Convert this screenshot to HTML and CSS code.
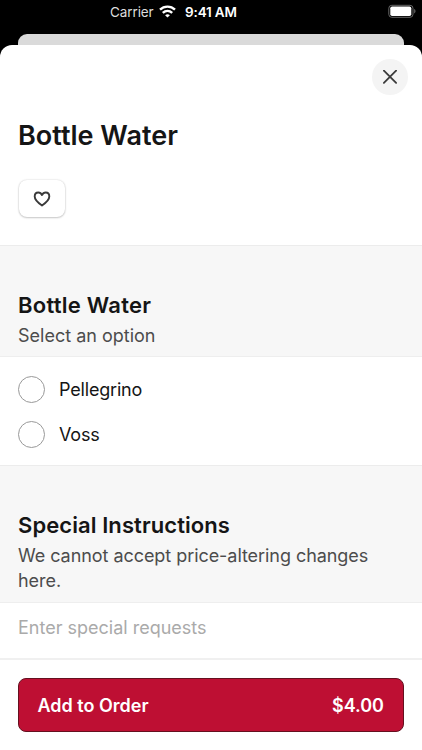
FILE: index.html
```html
<!DOCTYPE html>
<html lang="en">
<head>
<meta charset="utf-8">
<title>Bottle Water</title>
<link rel="stylesheet" href="styles.css">
</head>
<body>
<header class="status">
  <div class="status-center">
    <span class="carrier">Carrier</span>
    <svg class="wifi" viewBox="0 0 17 13" width="17" height="13" fill="none" stroke="#fff" stroke-width="2.4">
      <path d="M1 4.700C5.200.6 11.800.6 16 4.700"/>
      <path d="M3.800 7.900c2.700-2.500 6.700-2.500 9.400 0"/>
      <path d="M8.500 12.600 6.100 10.200c1.400-1.200 3.400-1.200 4.800 0z" fill="#fff" stroke="none"/>
    </svg>
    <span class="time">9:41 AM</span>
  </div>
  <svg class="battery" viewBox="0 0 28 14" width="28" height="14">
    <rect x=".8" y="1.300" width="24.200" height="12" rx="3" fill="none" stroke="#666" stroke-width="1"/>
    <rect x="2.300" y="2.500" width="21" height="9.500" rx="1.800" fill="#fff"/>
    <path d="M26.200 5.100c1.700.5 1.700 3.900 0 4.400z" fill="#666"/>
  </svg>
</header>
<div class="back-card"></div>
<main class="sheet">
  <section class="intro">
    <button class="close" aria-label="Close">
      <svg viewBox="0 0 14 14" width="14" height="14" fill="none" stroke="#3a3a3a" stroke-width="1.8" stroke-linecap="round"><path d="M.9.7l12.200 12.200M13.100.7L.9 12.900"/></svg>
    </button>
    <h1>Bottle Water</h1>
    <button class="like" aria-label="Favorite">
      <svg viewBox="0 0 18 16" width="18" height="16" fill="none" stroke="#3a3a3a" stroke-width="1.900" stroke-linejoin="round"><path d="M9 14.500C5.500 12.200 1.700 9.200 1.700 5.600 1.700 3.100 3.300 1.500 5.300 1.500 7 1.500 8.300 2.500 9 4 9.700 2.500 11 1.500 12.700 1.500c2 0 3.600 1.600 3.600 4.100 0 3.600-3.800 6.600-7.300 8.900z"/></svg>
    </button>
  </section>
  <section class="band band-options">
    <h2>Bottle Water</h2>
    <p>Select an option</p>
  </section>
  <section class="options">
    <label class="option"><span class="radio"></span>Pellegrino</label>
    <label class="option"><span class="radio"></span>Voss</label>
  </section>
  <section class="band band-notes">
    <h2 class="notes-title">Special Instructions</h2>
    <p>We cannot accept price-altering changes here.</p>
  </section>
  <section class="request">Enter special requests</section>
  <footer class="footer">
    <button class="add"><span class="add-label">Add to Order</span><span class="price">$4.00</span></button>
  </footer>
</main>
</body>
</html>
```
FILE: styles.css
```css
* { box-sizing: border-box; }
body {
  margin: 0;
  width: 422px;
  height: 750px;
  overflow: hidden;
  display: flex;
  flex-direction: column;
  background: #000;
  color: #151515;
  font-family: Inter, sans-serif;
}
button { font: inherit; padding: 0; border: 0; }
h1, h2, p { margin: 0; }
h1, h2 { font-weight: 600; white-space: nowrap; }
.status {
  height: 34px;
  flex: none;
  display: flex;
  justify-content: space-between;
  align-items: flex-start;
  padding: 4px 6px 0 110px;
  color: #fff;
  font-size: 13.5px;
  line-height: 16px;
}
.status-center { display: flex; }
.carrier { width: 44px; color: #ddd; letter-spacing: -.1px; }
.wifi { margin: 1px 0 0 5px; }
.time { margin-left: 9px; font-weight: 600; white-space: nowrap; letter-spacing: -.15px; }
.back-card {
  height: 11px;
  flex: none;
  margin: 0 18px;
  background: #dadada;
  border-radius: 9px 9px 0 0;
}
.sheet {
  flex: 1;
  display: flex;
  flex-direction: column;
  background: #fff;
  border-radius: 12px 12px 0 0;
}
.intro {
  height: 200px;
  display: flex;
  flex-direction: column;
  align-items: flex-start;
  padding: 14px 14px 0 18px;
}
.close {
  width: 36px;
  height: 36px;
  align-self: flex-end;
  display: grid;
  place-items: center;
  border-radius: 50%;
  background: #f4f4f4;
}
h1 { margin-top: 24px; font-size: 27px; line-height: 34px; }
.like {
  width: 46px;
  height: 37px;
  margin: 27px 0 0 1px;
  display: grid;
  place-items: center;
  border-radius: 8px;
  background: #fff;
  box-shadow: 0 1px 2px rgba(0, 0, 0, .18), 0 0 2px rgba(0, 0, 0, .18);
}
.band {
  padding: 0 18px;
  background: #f7f7f7;
  border-top: 1px solid #ececec;
  border-bottom: 1px solid #eee;
}
.band-options { height: 112px; padding-top: 45px; }
.band-notes { height: 138px; padding-top: 45px; }
h2 { font-size: 22px; line-height: 28px; letter-spacing: .25px; }
.notes-title { letter-spacing: .08px; }
.band p { margin-top: 4px; font-size: 18px; line-height: 25px; color: #4c4c4c; }
.band-notes p { letter-spacing: -.055px; }
.options { height: 108px; padding: 10px 18px 0; }
.option {
  display: flex;
  align-items: center;
  gap: 14px;
  height: 45px;
  font-size: 18px;
  letter-spacing: -.18px;
}
.radio {
  width: 27px;
  height: 27px;
  border: 1px solid #999;
  border-radius: 50%;
}
.request {
  height: 55px;
  padding: 12px 18px 0;
  font-size: 18px;
  line-height: 25px;
  color: #aaa;
}
.footer {
  flex: 1;
  padding: 18px 18px 0;
  border-top: 2px solid #f0f0f0;
}
.add {
  width: 386px;
  height: 54px;
  display: flex;
  justify-content: space-between;
  align-items: center;
  padding: 0 19px 0 18.5px;
  border: 1px solid #65101f;
  border-radius: 8px;
  background: #be0f33;
  color: #fff;
  font-size: 18px;
  font-weight: 600;
}
```
